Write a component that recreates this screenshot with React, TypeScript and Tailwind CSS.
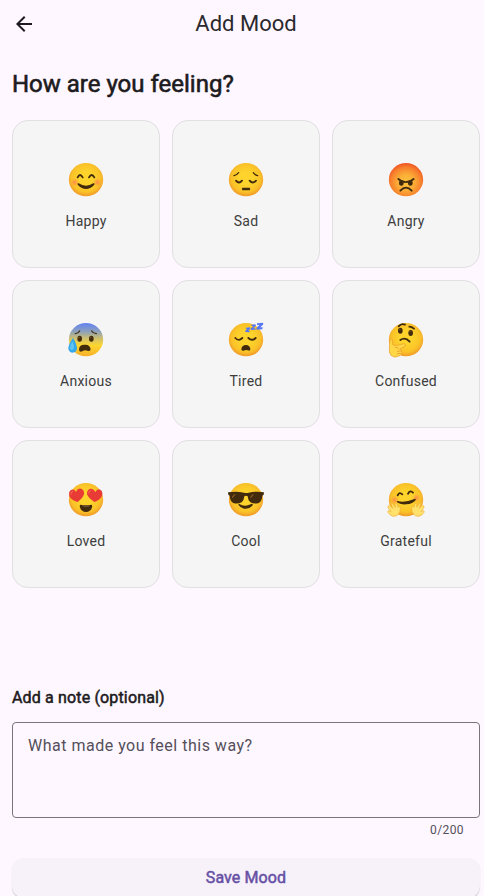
import type { ReactNode } from 'react';

const INK = '#422b0d';

function Face({ id, tone = 'yellow', children }: { id: string; tone?: 'yellow' | 'red' | 'blue'; children: ReactNode }) {
  return (
    <svg className="block h-10 w-10" viewBox="30 30 120 120" aria-hidden="true">
      <defs>
        {tone === 'yellow' && (
          <radialGradient id={id} cx="0.5" cy="0.45" r="0.56">
            <stop offset="0.35" stopColor="#fdd32c" />
            <stop offset="0.75" stopColor="#fac228" />
            <stop offset="1" stopColor="#f0962a" />
          </radialGradient>
        )}
        {tone === 'red' && (
          <radialGradient id={id} cx="0.5" cy="0.58" r="0.6">
            <stop offset="0" stopColor="#ffc53d" />
            <stop offset="0.4" stopColor="#fbad37" />
            <stop offset="0.75" stopColor="#f77f2c" />
            <stop offset="1" stopColor="#ee4d22" />
          </radialGradient>
        )}
        {tone === 'blue' && (
          <linearGradient id={id} x1="0" y1="0" x2="0" y2="1">
            <stop offset="0.02" stopColor="#6584f0" />
            <stop offset="0.25" stopColor="#8ba0bd" />
            <stop offset="0.5" stopColor="#d9c461" />
            <stop offset="0.68" stopColor="#fdd62f" />
            <stop offset="1" stopColor="#f6ae29" />
          </linearGradient>
        )}
        <radialGradient id={id + '-blush'}>
          <stop offset="0" stopColor="#ff7555" stopOpacity="0.75" />
          <stop offset="1" stopColor="#ff8a50" stopOpacity="0" />
        </radialGradient>
      </defs>
      <ellipse cx="90" cy="89" rx="51.5" ry="50" fill={'url(#' + id + ')'} />
      {children}
    </svg>
  );
}

const stroke = { fill: 'none', stroke: INK, strokeWidth: 5.5, strokeLinecap: 'round' as const, strokeLinejoin: 'round' as const };

const Happy = () => (
  <Face id="happy">
    <circle cx="56" cy="97" r="13" fill="url(#happy-blush)" />
    <circle cx="124" cy="97" r="13" fill="url(#happy-blush)" />
    <path {...stroke} d="M65 82Q72 68 80 82M99 82Q107 68 115 82" />
    <path d="M68 100Q90 114 112 100Q117 99 115 104Q90 130 65 104Q63 99 68 100Z" fill={INK} />
  </Face>
);

const Sad = () => (
  <Face id="sad">
    <path {...stroke} strokeWidth={4} d="M54 77Q61 76 68 68M112 68Q118 76 125 77" />
    <path {...stroke} d="M60 92Q69 103 78 92M101 92Q110 103 120 92" />
    <path d="M79 113H101Q105 117 101 121H79Q76 117 79 113Z" fill={INK} />
  </Face>
);

const Angry = () => (
  <Face id="angry" tone="red">
    <ellipse cx="76" cy="99" rx="7" ry="8" fill={INK} />
    <ellipse cx="103" cy="99" rx="7" ry="8" fill={INK} />
    <path {...stroke} d="M67 87Q76 96 87 96M92 96Q103 96 113 87" />
    <path {...stroke} d="M73 122Q90 104 107 122" />
  </Face>
);

const Anxious = () => (
  <Face id="anxious" tone="blue">
    <path {...stroke} strokeWidth={4} d="M58 71Q66 71 71 63M107 63Q112 71 121 71" />
    <ellipse cx="71" cy="86" rx="7" ry="9" fill={INK} />
    <ellipse cx="106" cy="86" rx="7" ry="9" fill={INK} />
    <circle cx="69" cy="83" r="2" fill="#896024" />
    <circle cx="104" cy="83" r="2" fill="#896024" />
    <path d="M69 119Q69 103 87 104Q102 103 104 118Q103 126 94 122Q86 119 79 124Q70 128 69 119Z" fill={INK} />
    <path d="M51 84Q38 102 37 115Q38 127 49 128Q62 128 63 115Q62 101 51 84Z" fill="#35a8eb" />
    <path d="M49 94Q43 105 42 115Q43 121 49 121Q56 116 54 107Z" fill="#62c5f3" />
  </Face>
);

const Tired = () => (
  <Face id="tired">
    <path {...stroke} d="M58 84Q68 95 79 84M97 84Q108 95 119 84" />
    <path d="M76 117Q78 105 90 105Q102 106 103 117Q103 124 96 121Q90 119 83 122Q76 124 76 117Z" fill={INK} />
    <path d="M90 52L102 51L103 55L97 61L102 62L100 66L88 65L88 61L94 55L89 56ZM106 43L118 42L120 46L112 54L119 54L118 58L105 59L104 55L112 47L107 47ZM123 39L141 37L142 42L133 51L140 51L139 57L122 58L121 53L131 43L123 44Z" transform="translate(0 1)" fill="#5677f5" />
  </Face>
);

const Confused = () => (
  <Face id="confused">
    <path {...stroke} d="M68 49Q76 39 87 44M100 50Q107 50 114 56" />
    <ellipse cx="73" cy="62" rx="7" ry="9" fill={INK} />
    <ellipse cx="104" cy="69" rx="7" ry="9" fill={INK} />
    <circle cx="71" cy="58" r="2" fill="#896024" />
    <circle cx="102" cy="65" r="2" fill="#896024" />
    <path {...stroke} d="M73 90Q88 80 101 95" />
    <path d="M42 89Q43 84 48 87L51 105L65 106L83 101Q91 102 88 108L72 117L77 122Q78 136 66 139Q55 145 45 136Q39 130 40 117Z" fill="#ffd747" stroke="#e99a2c" strokeWidth="2" strokeLinejoin="round" />
    <path d="M56 111Q66 113 70 118M63 124L75 123M63 131L74 130" fill="none" stroke="#e99a2c" strokeWidth="2.5" />
  </Face>
);

const Loved = () => (
  <Face id="loved">
    <path d="M65 96Q45 90 40 78Q37 65 45 60Q54 56 60 66Q65 54 75 56Q86 60 84 73Q80 85 65 96Z" fill="#e83b36" />
    <path d="M115 96Q98 85 93 73Q92 59 103 56Q112 55 118 66Q124 55 133 59Q142 64 138 78Q131 91 115 96Z" fill="#e83b36" />
    <path d="M45 72Q44 65 50 64M98 70Q98 62 104 62" fill="none" stroke="#fa6f57" strokeWidth="3" strokeLinecap="round" />
    <path d="M73 104Q90 108 106 104Q110 105 108 112Q105 125 90 126Q75 125 72 112Q70 105 73 104Z" fill={INK} />
    <path d="M78 106Q90 109 102 106Q101 111 90 111Q79 111 78 106Z" fill="#6f5541" />
  </Face>
);

const Cool = () => (
  <Face id="cool">
    <path d="M36 67Q62 63 84 68Q91 70 98 68Q119 63 144 67L143 74L139 77Q138 94 128 99Q115 103 103 97Q96 92 95 79Q90 76 85 79Q84 92 77 97Q65 103 52 99Q42 94 41 77L37 74Z" fill="#422b0d" />
    <path d="M48 80L55 73L59 73L49 85ZM103 80L110 73L114 73L104 85Z" fill="#8c5c25" />
    <path d="M70 102Q83 110 98 105L108 101Q113 102 109 107Q98 119 84 116Q73 114 68 106Q66 100 70 102Z" fill={INK} />
  </Face>
);

const Hand = () => (
  <path d="M38 107Q40 103 44 108L50 115L45 101Q47 96 51 102L58 112L57 101Q59 97 64 102L66 112L69 109Q75 109 73 117Q72 126 68 132Q62 140 51 139Q41 136 36 127Q34 123 38 122L45 124L37 115Q34 111 38 107Z" fill="#ffe16b" stroke="#f3ad32" strokeWidth="2" strokeLinejoin="round" />
);

const Grateful = () => (
  <Face id="grateful">
    <circle cx="56" cy="90" r="13" fill="url(#grateful-blush)" />
    <circle cx="121" cy="84" r="13" fill="url(#grateful-blush)" />
    <path {...stroke} d="M65 76Q70 64 79 73M96 71Q103 59 111 68" />
    <path d="M65 93Q86 99 115 87Q121 85 119 90Q111 102 91 103Q73 105 63 97Q61 92 65 93Z" fill={INK} />
    <Hand />
    <g transform="translate(180 0) scale(-1 1)"><Hand /></g>
  </Face>
);

const moods = [
  { label: 'Happy', Icon: Happy },
  { label: 'Sad', Icon: Sad },
  { label: 'Angry', Icon: Angry },
  { label: 'Anxious', Icon: Anxious },
  { label: 'Tired', Icon: Tired },
  { label: 'Confused', Icon: Confused },
  { label: 'Loved', Icon: Loved },
  { label: 'Cool', Icon: Cool },
  { label: 'Grateful', Icon: Grateful },
];

export default function App() {
  return (
    <div className="h-[896px] w-full overflow-hidden bg-[#fef7ff] font-[Roboto,sans-serif] text-[#1d1b20]">
      <div className="w-[492px]">
        <header className="grid h-12 grid-cols-[48px_1fr_48px] items-center">
          <button className="flex h-12 items-center justify-center" aria-label="Back">
            <svg className="h-6 w-6" viewBox="0 0 24 24" fill="currentColor">
              <path d="M20 11H7.83l5.59-5.59L12 4l-8 8 8 8 1.41-1.41L7.83 13H20v-2z" />
            </svg>
          </button>
          <h1 className="text-center text-[22px] leading-7 text-[#2b292e]">Add Mood</h1>
        </header>
        <main className="px-3 pt-5">
          <h2 className="text-2xl leading-8 [-webkit-text-stroke:0.6px_#1d1b20]">How are you feeling?</h2>
          <div className="mt-5 grid grid-cols-3 gap-3">
            {moods.map(({ label, Icon }) => (
              <button key={label} className="flex h-[148px] flex-col items-center rounded-2xl border border-[#e0e0e0] bg-[#f5f5f5] pt-[39px]">
                <Icon />
                <span className="mt-[11px] text-sm leading-5 tracking-[0.25px] text-[#3d3d3d]">{label}</span>
              </button>
            ))}
          </div>
          <h3 className="mt-[98px] text-base leading-6 tracking-[0.15px] [-webkit-text-stroke:0.5px_#1d1b20]">Add a note (optional)</h3>
          <div className="mt-3 h-24 rounded border border-[#79747e] px-[15px] pt-[11px] text-base leading-6 tracking-[0.5px] text-[#544f5a]">
            What made you feel this way?
          </div>
          <p className="mt-1 pr-4 text-right text-xs leading-4 tracking-[0.4px] text-[#544f5a]">0/200</p>
          <button className="mt-5 block h-10 w-full rounded-xl bg-[#f7f2fa] text-base tracking-[0.1px] text-[#6750a4] shadow-[0_1px_1px_rgba(0,0,0,0.22)] [-webkit-text-stroke:0.5px_#6750a4]">Save Mood</button>
        </main>
      </div>
    </div>
  );
}
